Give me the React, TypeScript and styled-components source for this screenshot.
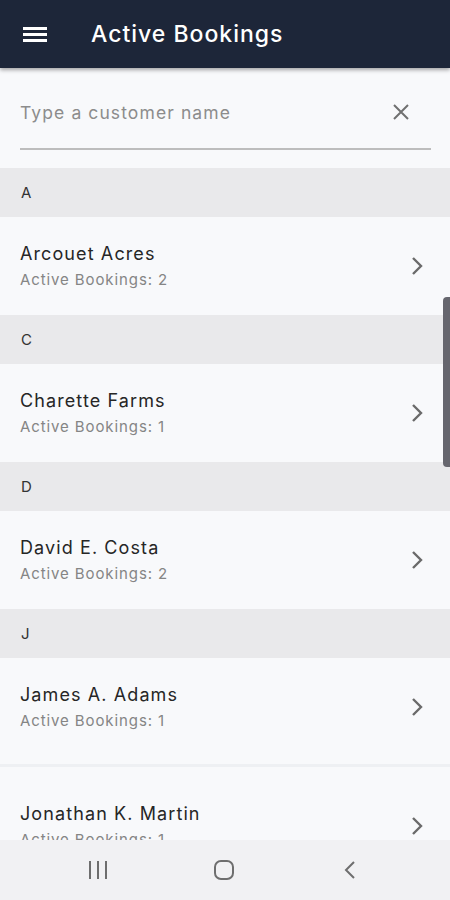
import React from "react";
import styled, { createGlobalStyle } from "styled-components";

const Global = createGlobalStyle`
  html, body { margin: 0; padding: 0; }
  body { background: #f8f9fb; font-family: Inter, "Noto Sans", sans-serif; }
  * { box-sizing: border-box; }
`;

const Screen = styled.div`
  width: 450px;
  height: 900px;
  display: flex;
  flex-direction: column;
  background: #f8f9fb;
  position: relative;
  overflow: hidden;
`;

const AppBar = styled.header`
  height: 68px;
  flex: none;
  background: #1d2639;
  display: flex;
  align-items: center;
  padding-left: 23px;
  gap: 44px;
  box-shadow: 0 2px 4px rgba(0, 0, 0, 0.35);
  position: relative;
  z-index: 2;
`;

const Title = styled.h1`
  margin: 0;
  color: #ffffff;
  font-family: Inter, "Noto Sans", sans-serif;
  font-weight: 500;
  font-size: 23px;
  letter-spacing: 1px;
`;

const SearchArea = styled.div`
  flex: none;
  height: 100px;
  padding: 0 19px 0 20px;
  display: flex;
  flex-direction: column;
`;

const SearchRow = styled.div`
  flex: 1;
  display: flex;
  align-items: center;
  justify-content: space-between;
  border-bottom: 2px solid #bdbdbd;
  margin-bottom: 18px;
  padding-right: 20px;
  padding-top: 8px;
`;

const Placeholder = styled.span`
  font-size: 17.5px;
  letter-spacing: 1.1px;
  color: #8c8c8c;
`;

const List = styled.div`
  flex: 1;
  display: flex;
  flex-direction: column;
  overflow: hidden;
`;

const SectionHeader = styled.div`
  flex: none;
  height: 49px;
  background: #e9e9eb;
  display: flex;
  align-items: center;
  padding-left: 21px;
  font-size: 15px;
  letter-spacing: 0.5px;
  color: #333;
`;

const Item = styled.div<{ $h: number; $top: number }>`
  flex: none;
  height: ${(p) => p.$h}px;
  display: flex;
  align-items: flex-start;
  justify-content: space-between;
  padding: ${(p) => p.$top}px 26px 0 20px;
  background: #f8f9fb;
`;

const Texts = styled.div`
  display: flex;
  flex-direction: column;
  gap: 6px;
`;

const Name = styled.div`
  font-size: 18px;
  letter-spacing: 1.1px;
  color: #262626;
  line-height: 22px;
`;

const Sub = styled.div`
  font-size: 15px;
  letter-spacing: 0.9px;
  color: #858585;
  line-height: 18px;
`;

const ChevronBox = styled.div`
  padding-top: 13px;
  display: flex;
`;

const Divider = styled.div`
  flex: none;
  height: 3px;
  background: #eef0f3;
`;

const NavBar = styled.nav`
  flex: none;
  height: 60px;
  background: #f1f1f3;
  display: grid;
  grid-template-columns: 1fr 1fr 1fr;
  align-items: center;
  justify-items: center;
  padding: 0 37px 0 35px;
`;

const ScrollThumb = styled.div`
  position: absolute;
  right: 0;
  top: 297px;
  width: 7px;
  height: 170px;
  background: #66666e;
  border-radius: 4px 0 0 4px;
`;

const Menu = () => (
  <svg width="24" height="18" viewBox="0 0 24 18">
    <rect x="0" y="2" width="24" height="3" fill="#fff" />
    <rect x="0" y="8" width="24" height="3" fill="#fff" />
    <rect x="0" y="14" width="24" height="3" fill="#fff" />
  </svg>
);

const Close = () => (
  <svg width="20" height="20" viewBox="0 0 20 20">
    <path d="M3 3 L17 17 M17 3 L3 17" stroke="#707070" strokeWidth="2" fill="none" />
  </svg>
);

const Chevron = () => (
  <svg width="14" height="20" viewBox="0 0 14 20">
    <path d="M3 2 L11 10 L3 18" stroke="#6a6a6a" strokeWidth="2.4" fill="none" />
  </svg>
);

const data: { letter: string; items: { name: string; count: number }[] }[] = [
  { letter: "A", items: [{ name: "Arcouet Acres", count: 2 }] },
  { letter: "C", items: [{ name: "Charette Farms", count: 1 }] },
  { letter: "D", items: [{ name: "David E. Costa", count: 2 }] },
  {
    letter: "J",
    items: [
      { name: "James A. Adams", count: 1 },
      { name: "Jonathan K. Martin", count: 1 },
    ],
  },
];

export default function App() {
  return (
    <>
      <Global />
      <Screen>
        <AppBar>
          <Menu />
          <Title>Active Bookings</Title>
        </AppBar>
        <SearchArea>
          <SearchRow>
            <Placeholder>Type a customer name</Placeholder>
            <Close />
          </SearchRow>
        </SearchArea>
        <List>
          {data.map((sec) => (
            <React.Fragment key={sec.letter}>
              <SectionHeader>{sec.letter}</SectionHeader>
              {sec.items.map((it, i) => {
                const multi = sec.items.length > 1;
                const h = multi ? (i === 0 ? 106 : 110) : 98;
                const top = multi && i > 0 ? 36 : 26;
                return (
                  <React.Fragment key={it.name}>
                    {i > 0 && <Divider />}
                    <Item $h={h} $top={top}>
                      <Texts>
                        <Name>{it.name}</Name>
                        <Sub>Active Bookings: {it.count}</Sub>
                      </Texts>
                      <ChevronBox>
                        <Chevron />
                      </ChevronBox>
                    </Item>
                  </React.Fragment>
                );
              })}
            </React.Fragment>
          ))}
        </List>
        <NavBar>
          <svg width="22" height="20" viewBox="0 0 22 20">
            <rect x="2" y="1" width="2" height="18" fill="#6e6e6e" />
            <rect x="10" y="1" width="2" height="18" fill="#6e6e6e" />
            <rect x="18" y="1" width="2" height="18" fill="#6e6e6e" />
          </svg>
          <svg width="22" height="22" viewBox="0 0 22 22">
            <rect x="2" y="2" width="18" height="18" rx="6" stroke="#6e6e6e" strokeWidth="2" fill="none" />
          </svg>
          <svg width="14" height="20" viewBox="0 0 14 20">
            <path d="M11 2 L3 10 L11 18" stroke="#6e6e6e" strokeWidth="2" fill="none" />
          </svg>
        </NavBar>
        <ScrollThumb />
      </Screen>
    </>
  );
}
